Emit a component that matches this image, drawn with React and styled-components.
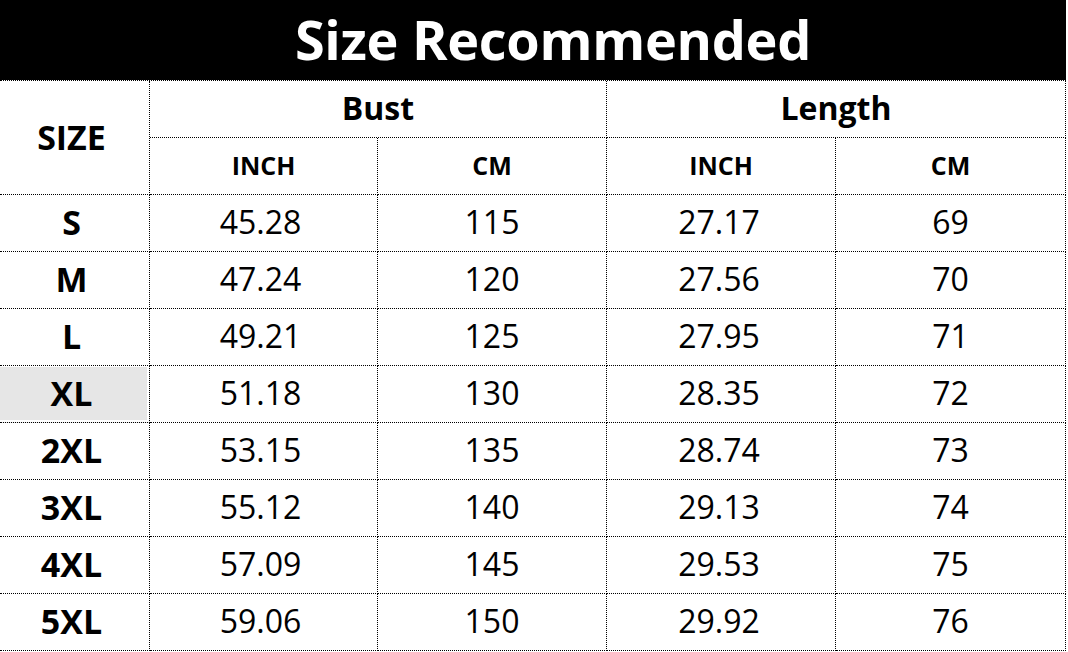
import React from "react";
import styled, { createGlobalStyle } from "styled-components";

const Global = createGlobalStyle`
  html, body { margin: 0; padding: 0; background: #fff; }
  body { font-family: "Open Sans", "Noto Sans", "DejaVu Sans", sans-serif; color: #000; }
`;

const Page = styled.div`
  width: 1068px;
  height: 652px;
  background: #fff;
  overflow: hidden;
`;

const TitleBar = styled.div`
  width: 1066px;
  height: 80px;
  background: #000;
  color: #fff;
  display: flex;
  align-items: center;
  justify-content: center;
  font-weight: 700;
  font-size: 54px;
  letter-spacing: -0.3px;
  line-height: 1;
  padding: 0 0 2px 40px;
  box-sizing: border-box;
`;

const Grid = styled.div`
  width: 1066px;
  display: grid;
  grid-template-columns: 150px 228px 229px 229px 230px;
  grid-auto-rows: 57px;
  border-top: 1px dotted #000;
`;

const Cell = styled.div`
  box-sizing: border-box;
  border-right: 1px dotted #000;
  border-bottom: 1px dotted #000;
  display: flex;
  align-items: center;
  justify-content: center;
  font-size: ${(p) => p.$size}px;
  font-weight: ${(p) => (p.$bold ? 700 : 400)};
  grid-column: ${(p) => (p.$span ? `span ${p.$span}` : "auto")};
  grid-row: ${(p) => (p.$rows ? `span ${p.$rows}` : "auto")};
  line-height: 1;
  padding-bottom: 2px;
  padding-right: ${(p) => (p.$nudge ? p.$nudge : 0)}px;
`;

const SizeCell = styled(Cell)`
  padding-right: 6px;
  background: ${(p) => (p.$shade ? "#e6e6e6" : "transparent")};
  box-shadow: ${(p) =>
    p.$shade ? "inset -2px 0 0 #fff, inset 0 1px 0 #fff, inset 0 -2px 0 #fff" : "none"};
`;

const rows = [
  ["S", "45.28", "115", "27.17", "69"],
  ["M", "47.24", "120", "27.56", "70"],
  ["L", "49.21", "125", "27.95", "71"],
  ["XL", "51.18", "130", "28.35", "72"],
  ["2XL", "53.15", "135", "28.74", "73"],
  ["3XL", "55.12", "140", "29.13", "74"],
  ["4XL", "57.09", "145", "29.53", "75"],
  ["5XL", "59.06", "150", "29.92", "76"],
];

export default function App() {
  return (
    <Page>
      <Global />
      <TitleBar>Size Recommended</TitleBar>
      <Grid>
        <SizeCell $rows={2} $bold $size={34}>SIZE</SizeCell>
        <Cell $span={2} $bold $size={32}>Bust</Cell>
        <Cell $span={2} $bold $size={32}>Length</Cell>
        <Cell $bold $size={25}>INCH</Cell>
        <Cell $bold $size={25}>CM</Cell>
        <Cell $bold $size={25}>INCH</Cell>
        <Cell $bold $size={25}>CM</Cell>
        {rows.map((r) => (
          <React.Fragment key={r[0]}>
            <SizeCell $bold $size={34} $shade={r[0] === "XL"}>{r[0]}</SizeCell>
            <Cell $size={32} $nudge={6}>{r[1]}</Cell>
            <Cell $size={32}>{r[2]}</Cell>
            <Cell $size={32} $nudge={4}>{r[3]}</Cell>
            <Cell $size={32}>{r[4]}</Cell>
          </React.Fragment>
        ))}
      </Grid>
    </Page>
  );
}
